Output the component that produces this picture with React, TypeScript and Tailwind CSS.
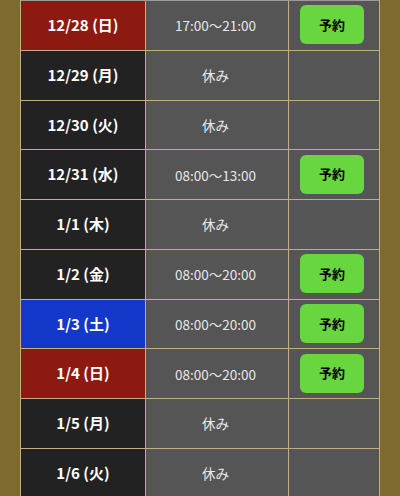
type Day = {
  date: string;
  time: string;
  kind: "sun" | "sat" | "normal";
  open: boolean;
};

const days: Day[] = [
  { date: "12/28 (日)", time: "17:00〜21:00", kind: "sun", open: true },
  { date: "12/29 (月)", time: "休み", kind: "normal", open: false },
  { date: "12/30 (火)", time: "休み", kind: "normal", open: false },
  { date: "12/31 (水)", time: "08:00〜13:00", kind: "normal", open: true },
  { date: "1/1 (木)", time: "休み", kind: "normal", open: false },
  { date: "1/2 (金)", time: "08:00〜20:00", kind: "normal", open: true },
  { date: "1/3 (土)", time: "08:00〜20:00", kind: "sat", open: true },
  { date: "1/4 (日)", time: "08:00〜20:00", kind: "sun", open: true },
  { date: "1/5 (月)", time: "休み", kind: "normal", open: false },
  { date: "1/6 (火)", time: "休み", kind: "normal", open: false },
];

const dateBg = {
  sun: "bg-[#8c1a11]",
  sat: "bg-[#1438c9]",
  normal: "bg-[#222222]",
};

export default function App() {
  return (
    <div
      className="w-[400px] h-[496px] overflow-hidden bg-[#7e6a2f] px-[20px]"
      style={{ fontFamily: '"Noto Sans CJK JP", "Noto Sans", sans-serif' }}
    >
      <div className="border-l border-r border-[#c4ad80]">
        <div className="h-px bg-[#9a9a9a]" />
        {days.map((d) => (
          <div key={d.date} className="flex h-[49.75px] border-b border-[#c4ad80]">
            {/* date */}
            <div
              className={`w-[125px] shrink-0 flex items-center justify-center border-r border-[#c4ad80] text-white font-bold text-[15px] ${dateBg[d.kind]}`}
            >
              {d.date}
            </div>
            {/* hours */}
            <div className="w-[143px] shrink-0 flex items-center justify-center pr-[3px] border-r border-[#c4ad80] bg-[#555555] text-[#e8e8e8] text-[13.5px]">
              {d.time}
            </div>
            {/* reserve */}
            <div className="flex-1 flex items-center pl-[11px] pb-[1px] bg-[#555555]">
              {d.open && (
                <button className="w-[64px] h-[39px] rounded-[6px] bg-[#67d63f] text-black font-bold text-[13px]">
                  予約
                </button>
              )}
            </div>
          </div>
        ))}
      </div>
    </div>
  );
}
